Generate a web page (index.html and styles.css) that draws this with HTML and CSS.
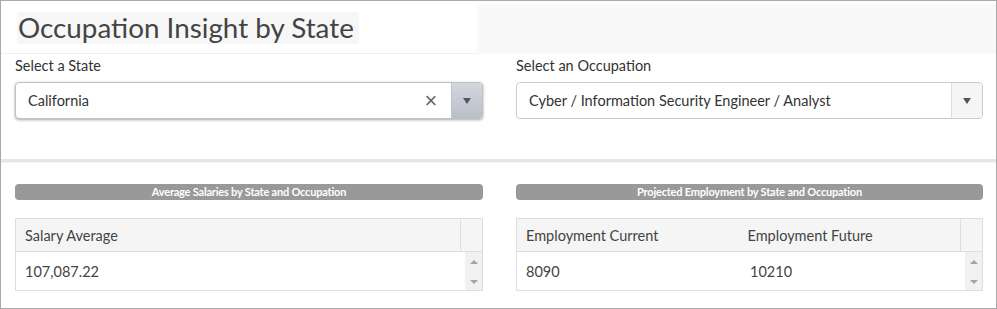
FILE: index.html
```html
<!DOCTYPE html>
<html lang="en">
<head>
<meta charset="utf-8">
<title>Occupation Insight by State</title>
<link rel="stylesheet" href="styles.css">
</head>
<body>
<div class="frame">
  <header class="header">
    <div class="header-left"><h1 class="title">Occupation Insight by State</h1></div>
    <div class="header-right"></div>
  </header>

  <section class="filters">
    <div class="field">
      <label class="label">Select a State</label>
      <div class="select focused">
        <span class="select-value">California</span>
        <span class="clear">&times;</span>
        <span class="arrow arrow-active"><span class="caret"></span></span>
      </div>
    </div>
    <div class="field">
      <label class="label">Select an Occupation</label>
      <div class="select">
        <span class="select-value">Cyber / Information Security Engineer / Analyst</span>
        <span class="arrow"><span class="caret"></span></span>
      </div>
    </div>
  </section>

  <div class="divider"></div>

  <section class="panels">
    <div class="panel">
      <div class="bar">Average Salaries by State and Occupation</div>
      <div class="table">
        <div class="thead">
          <div class="th">Salary Average</div>
          <div class="th-scroll"></div>
        </div>
        <div class="tbody">
          <div class="td">107,087.22</div>
          <div class="scroll"><span class="up"></span><span class="down"></span></div>
        </div>
      </div>
    </div>
    <div class="panel">
      <div class="bar">Projected Employment by State and Occupation</div>
      <div class="table">
        <div class="thead">
          <div class="th">Employment Current</div>
          <div class="th">Employment Future</div>
          <div class="th-scroll"></div>
        </div>
        <div class="tbody">
          <div class="td">8090</div>
          <div class="td">10210</div>
          <div class="scroll"><span class="up"></span><span class="down"></span></div>
        </div>
      </div>
    </div>
  </section>
</div>
</body>
</html>
```

FILE: styles.css
```css
* { box-sizing: border-box; }
html, body { margin: 0; padding: 0; background: #fff; }
body { font-family: "Lato", "Open Sans", sans-serif; color: #333; }

.frame {
  width: 997px;
  height: 309px;
  border: 1px solid #a9a9a9;
  overflow: hidden;
}

.header {
  display: flex;
  margin-top: 3px;
  height: 50px;
}
.header-left {
  width: 476px;
  background: #fff;
  border-bottom: 1px solid #f0f0f0;
  padding: 8px 0 0 16px;
}
.header-right { flex: 1; background: #f9f9f9; }
.title {
  display: inline-block;
  margin: 0;
  background: #f7f7f7;
  padding: 0 5px 0 1px;
  height: 32px;
  line-height: 32px;
  font-size: 27.8px;
  font-weight: 400;
  color: #444;
}

.filters {
  display: grid;
  grid-template-columns: 468px 467px;
  column-gap: 33px;
  padding: 2px 0 0 14px;
}
.label {
  display: block;
  font-size: 14.5px;
  line-height: 20px;
  color: #333;
  margin-bottom: 6px;
}
.select {
  display: flex;
  align-items: center;
  height: 37px;
  border: 1px solid #ccc;
  border-radius: 4px;
  background: #fff;
  overflow: hidden;
}
.select.focused {
  border-color: #c0c0c0;
  box-shadow: 0 1px 3px rgba(0,0,0,0.35);
}
.select-value {
  flex: 1;
  padding-left: 12px;
  font-size: 14.5px;
  color: #333;
}
.clear {
  width: 20px;
  font-size: 22px;
  line-height: 20px;
  color: #666;
  margin-right: 10px;
  text-align: center;
  font-family: "Liberation Sans", sans-serif;
}
.arrow {
  width: 31px;
  height: 100%;
  display: flex;
  align-items: center;
  justify-content: center;
  background: #f5f5f5;
  border-left: 1px solid #ddd;
}
.arrow-active {
  background: linear-gradient(#d3d7de, #b9bec9);
  border-left: 1px solid #c0c4cc;
}
.caret {
  width: 0; height: 0;
  border-left: 4px solid transparent;
  border-right: 4px solid transparent;
  border-top: 6px solid #555;
}

.divider {
  margin-top: 40px;
  height: 4px;
  border-top: 3px solid #e6e6e6;
  border-bottom: 1px solid #f3f3f3;
}

.panels {
  display: grid;
  grid-template-columns: 468px 467px;
  column-gap: 33px;
  padding: 21px 0 0 14px;
}
.bar {
  height: 16px;
  line-height: 16px;
  background: #999;
  border-radius: 4px;
  color: #fff;
  text-align: center;
  font-size: 11px;
  font-weight: 700;
  letter-spacing: -0.2px;
}
.table {
  margin-top: 18px;
  border: 1px solid #ddd;
}
.thead {
  display: flex;
  height: 33px;
  background: #f5f5f5;
  border-bottom: 1px solid #ddd;
}
.th, .td {
  flex: 1;
  padding-left: 9px;
  font-size: 14.5px;
  color: #444;
  display: flex;
  align-items: center;
}
.th-scroll { width: 22px; border-left: 1px solid #ddd; }
.tbody { display: flex; height: 38px; background: #fff; }
.scroll {
  width: 17px;
  background: #f1f1f1;
  display: flex;
  flex-direction: column;
  justify-content: space-between;
  align-items: center;
  padding: 8px 0 6px;
}
.up, .down {
  width: 0; height: 0;
  border-left: 4px solid transparent;
  border-right: 4px solid transparent;
}
.up { border-bottom: 4px solid #a3a3a3; }
.down { border-top: 4px solid #a3a3a3; }
```
